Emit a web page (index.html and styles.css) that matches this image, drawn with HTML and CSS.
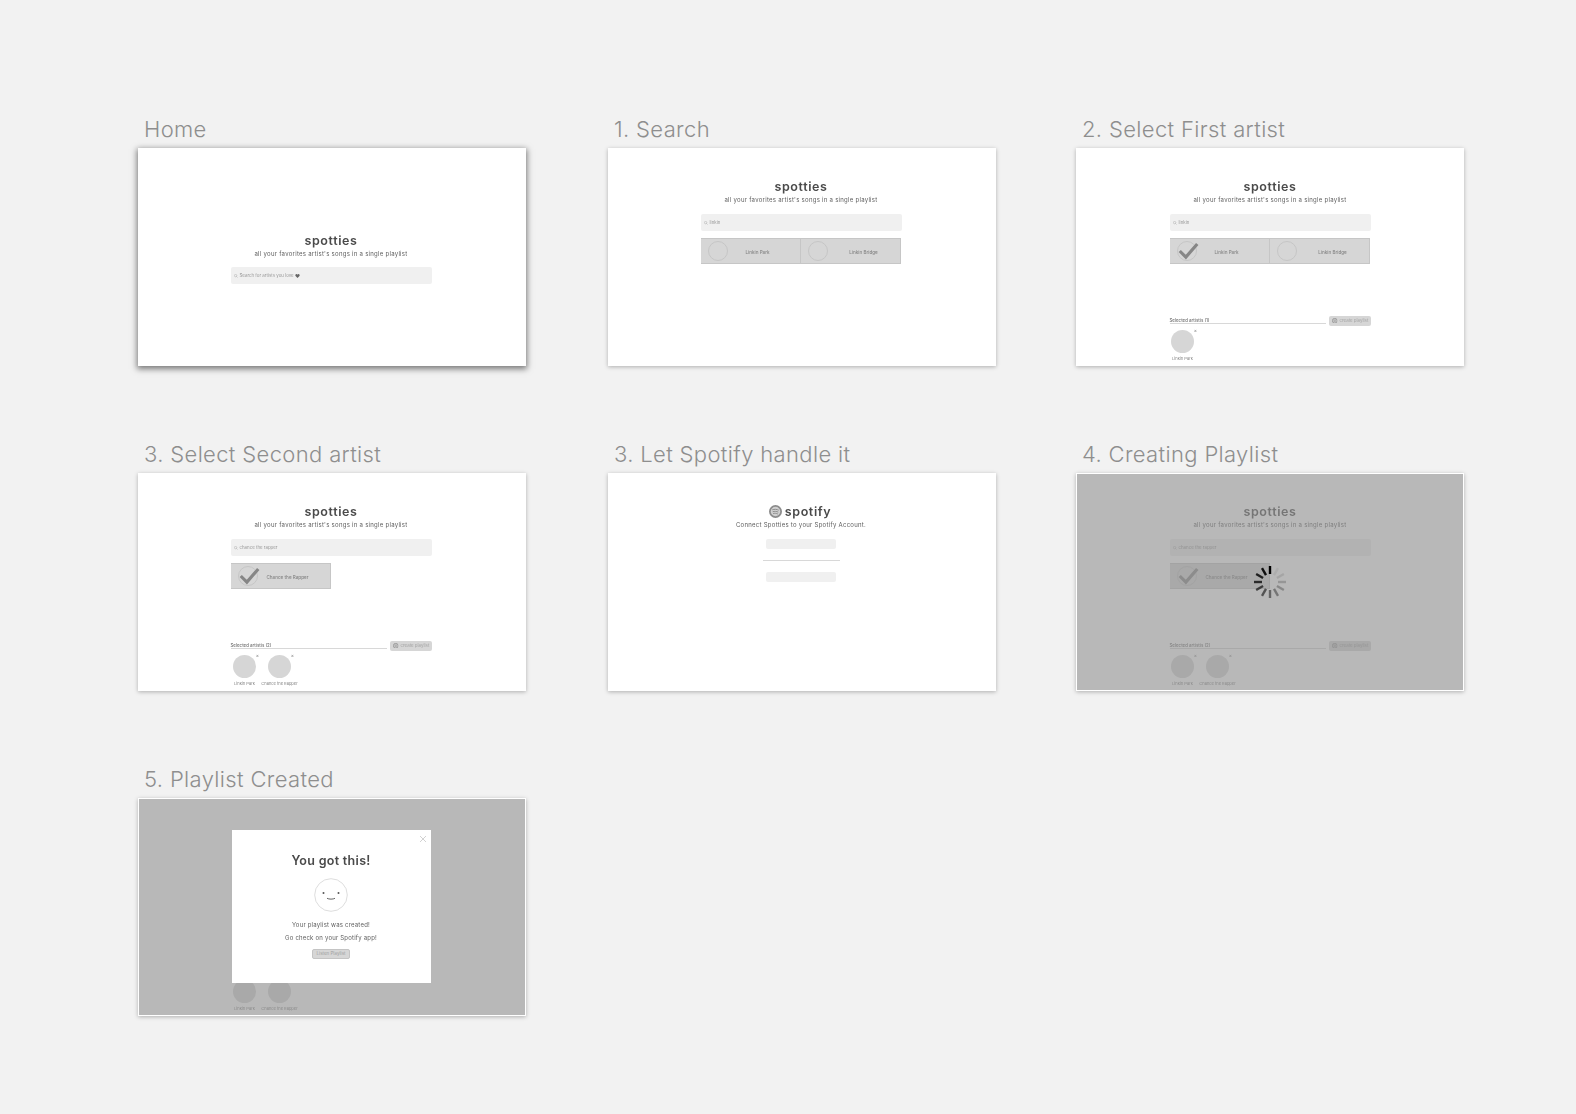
FILE: index.html
```html
<!DOCTYPE html>
<html lang="en">
<head>
    <meta charset="UTF-8">
    <meta name="viewport" content="width=device-width, initial-scale=1.0">
    <title>Spotties wireframes</title>
    <link rel="stylesheet" href="styles.css">
</head>
<body>

    <svg class="sprites" width="0" height="0" aria-hidden="true">
        <symbol id="search" viewBox="0 0 10 10">
            <circle cx="4" cy="4" r="3" fill="none" stroke="currentColor" stroke-width="1"/>
            <path d="M6.2 6.2 9 9" stroke="currentColor" stroke-width="1"/>
        </symbol>
        <symbol id="check" viewBox="0 0 24 20">
            <path d="M2 10 9 17 22 2" fill="none" stroke="currentColor" stroke-width="3.6"/>
        </symbol>
        <symbol id="spotify" viewBox="0 0 12 12">
            <circle cx="6" cy="6" r="5.2" fill="#d0d0d0" stroke="#8c8c8c" stroke-width="1.6"/>
            <path d="M3 4.4c2-.6 4.200-.5 6 .4M3.400 6.200c1.800-.5 3.600-.4 5.200.4M3.800 7.900c1.500-.4 3-.3 4.400.4" fill="none" stroke="#8c8c8c" stroke-width=".9"/>
        </symbol>
    </svg>

    <main class="board">

        <!-- Home -->
        <section class="screen">
            <h2 class="screen-title">Home</h2>
            <div class="frame frame-strong">
                <div class="app app-home">
                    <h1 class="brand">spotties</h1>
                    <p class="tagline">all your favorites artist's songs in a single playlist</p>
                    <div class="search">
                        <svg class="search-icon"><use href="#search"/></svg>
                        <span>Search for artists you love</span>
                        <svg class="heart" viewBox="0 0 10 9"><path d="M5 9 .6 4.300A2.500 2.500 0 0 1 5 1.500 2.500 2.500 0 0 1 9.400 4.300z" fill="#666"/></svg>
                    </div>
                </div>
            </div>
        </section>

        <!-- 1 -->
        <section class="screen">
            <h2 class="screen-title">1. Search</h2>
            <div class="frame">
                <div class="app">
                    <h1 class="brand">spotties</h1>
                    <p class="tagline">all your favorites artist's songs in a single playlist</p>
                    <div class="search"><svg class="search-icon"><use href="#search"/></svg><span>linkin</span></div>
                    <div class="results">
                        <div class="result"><span class="avatar"></span><span class="result-name">Linkin Park</span></div>
                        <div class="result"><span class="avatar"></span><span class="result-name">Linkin Bridge</span></div>
                    </div>
                </div>
            </div>
        </section>

        <!-- 2 -->
        <section class="screen">
            <h2 class="screen-title">2. Select First artist</h2>
            <div class="frame">
                <div class="app">
                    <h1 class="brand">spotties</h1>
                    <p class="tagline">all your favorites artist's songs in a single playlist</p>
                    <div class="search"><svg class="search-icon"><use href="#search"/></svg><span>linkin</span></div>
                    <div class="results">
                        <div class="result"><span class="avatar"><svg class="check"><use href="#check"/></svg></span><span class="result-name">Linkin Park</span></div>
                        <div class="result"><span class="avatar"></span><span class="result-name">Linkin Bridge</span></div>
                    </div>
                    <div class="selected">
                        <div class="selected-bar">
                            <span class="selected-label">Selected artistis (1)</span>
                            <span class="create-btn"><svg class="create-icon"><use href="#spotify"/></svg>create playlist</span>
                        </div>
                        <div class="artists">
                            <div class="artist"><span class="artist-pic"><i class="remove">×</i></span><span class="artist-name">Linkin Park</span></div>
                        </div>
                    </div>
                </div>
            </div>
        </section>

        <!-- 3 -->
        <section class="screen">
            <h2 class="screen-title">3. Select Second artist</h2>
            <div class="frame">
                <div class="app">
                    <h1 class="brand">spotties</h1>
                    <p class="tagline">all your favorites artist's songs in a single playlist</p>
                    <div class="search"><svg class="search-icon"><use href="#search"/></svg><span>chance the rapper</span></div>
                    <div class="results">
                        <div class="result"><span class="avatar"><svg class="check"><use href="#check"/></svg></span><span class="result-name">Chance the Rapper</span></div>
                    </div>
                    <div class="selected">
                        <div class="selected-bar">
                            <span class="selected-label">Selected artistis (2)</span>
                            <span class="create-btn"><svg class="create-icon"><use href="#spotify"/></svg>create playlist</span>
                        </div>
                        <div class="artists">
                            <div class="artist"><span class="artist-pic"><i class="remove">×</i></span><span class="artist-name">Linkin Park</span></div>
                            <div class="artist"><span class="artist-pic"><i class="remove">×</i></span><span class="artist-name">Chance the Rapper</span></div>
                        </div>
                    </div>
                </div>
            </div>
        </section>

        <!-- 3b -->
        <section class="screen">
            <h2 class="screen-title">3. Let Spotify handle it</h2>
            <div class="frame">
                <div class="app">
                    <h1 class="brand brand-spotify"><svg class="spotify-logo"><use href="#spotify"/></svg>spotify</h1>
                    <p class="tagline">Connect Spotties to your Spotify Account.</p>
                    <div class="login-field"></div>
                    <div class="login-rule"></div>
                    <div class="login-field login-field-last"></div>
                </div>
            </div>
        </section>

        <!-- 4 -->
        <section class="screen">
            <h2 class="screen-title">4. Creating Playlist</h2>
            <div class="frame">
                <div class="app app-faded">
                    <h1 class="brand">spotties</h1>
                    <p class="tagline">all your favorites artist's songs in a single playlist</p>
                    <div class="search"><svg class="search-icon"><use href="#search"/></svg><span>chance the rapper</span></div>
                    <div class="results">
                        <div class="result"><span class="avatar"><svg class="check"><use href="#check"/></svg></span><span class="result-name">Chance the Rapper</span></div>
                    </div>
                    <div class="selected">
                        <div class="selected-bar">
                            <span class="selected-label">Selected artistis (2)</span>
                            <span class="create-btn"><svg class="create-icon"><use href="#spotify"/></svg>create playlist</span>
                        </div>
                        <div class="artists">
                            <div class="artist"><span class="artist-pic"><i class="remove">×</i></span><span class="artist-name">Linkin Park</span></div>
                            <div class="artist"><span class="artist-pic"><i class="remove">×</i></span><span class="artist-name">Chance the Rapper</span></div>
                        </div>
                    </div>
                </div>
                <div class="overlay"></div>
                <svg class="spinner" viewBox="-17 -17 34 34">
                    <g stroke-width="2.400" stroke="#000">
                        <path d="M0-16V-8" stroke-opacity="1"/>
                        <path d="M0-16V-8" stroke-opacity=".06" transform="rotate(30)"/>
                        <path d="M0-16V-8" stroke-opacity=".1" transform="rotate(60)"/>
                        <path d="M0-16V-8" stroke-opacity=".18" transform="rotate(90)"/>
                        <path d="M0-16V-8" stroke-opacity=".26" transform="rotate(120)"/>
                        <path d="M0-16V-8" stroke-opacity=".36" transform="rotate(150)"/>
                        <path d="M0-16V-8" stroke-opacity=".45" transform="rotate(180)"/>
                        <path d="M0-16V-8" stroke-opacity=".55" transform="rotate(210)"/>
                        <path d="M0-16V-8" stroke-opacity=".65" transform="rotate(240)"/>
                        <path d="M0-16V-8" stroke-opacity=".75" transform="rotate(270)"/>
                        <path d="M0-16V-8" stroke-opacity=".82" transform="rotate(300)"/>
                        <path d="M0-16V-8" stroke-opacity=".92" transform="rotate(330)"/>
                    </g>
                </svg>
            </div>
        </section>

        <!-- 5 -->
        <section class="screen">
            <h2 class="screen-title">5. Playlist Created</h2>
            <div class="frame">
                <div class="app app-faded">
                    <div class="selected">
                        <div class="artists">
                            <div class="artist"><span class="artist-pic"></span><span class="artist-name">Linkin Park</span></div>
                            <div class="artist"><span class="artist-pic"></span><span class="artist-name">Chance the Rapper</span></div>
                        </div>
                    </div>
                </div>
                <div class="overlay"></div>
                <div class="modal">
                    <svg class="modal-close" viewBox="0 0 8 8"><path d="M1 1 7 7M7 1 1 7" stroke="#d2d2d2" stroke-width="1"/></svg>
                    <h3 class="modal-title">You got this!</h3>
                    <svg class="smile" viewBox="0 0 34 34">
                        <circle cx="17" cy="17" r="16.300" fill="#fff" stroke="#d4d4d4" stroke-width=".8"/>
                        <circle cx="9.500" cy="15" r="1" fill="#555"/>
                        <circle cx="24.500" cy="15" r="1" fill="#555"/>
                        <path d="M13 20.300c2 1.100 6 1.100 8 0" fill="none" stroke="#555" stroke-width=".9"/>
                    </svg>
                    <p class="modal-text">Your playlist was created!</p>
                    <p class="modal-text">Go check on your Spotify app!</p>
                    <span class="listen-btn">Listen Playlist</span>
                </div>
            </div>
        </section>

    </main>

</body>
</html>
```

FILE: styles.css
```css
body {
    margin: 0;
    background-color: #f2f2f2;
    font-family: Inter, "Liberation Sans", sans-serif;
    color: #4a4a4a;
}

.sprites {
    position: absolute;
}

.board {
    display: grid;
    grid-template-columns: 389px 387px 388px;
    column-gap: 81px;
    row-gap: 75px;
    padding: 116px 0 60px 138px;
}

.screen-title {
    margin: 0 0 6px 6px;
    font-size: 22px;
    line-height: 26px;
    font-weight: 300;
    letter-spacing: 0.35px;
    color: #8e8e8e;
}

.frame {
    position: relative;
    width: 388px;
    height: 218px;
    background-color: white;
    box-shadow: 0 1px 4px rgba(0, 0, 0, 0.28);
    overflow: hidden;
}

.frame-strong {
    box-shadow: 0 2px 6px 1px rgba(0, 0, 0, 0.5);
}

.app {
    display: flex;
    flex-direction: column;
    box-sizing: border-box;
    width: 201px;
    height: 100%;
    margin: 0 auto;
    padding-top: 31px;
    text-align: center;
    filter: blur(0.3px); /* a referencia e uma captura reduzida */
}

.screen:not(:nth-child(3n)) .app {
    margin-left: 92.500px;
}

.screen:nth-child(3n+1) .artists {
    margin-left: 1px;
}

.app-home {
    padding-top: 85px;
}

.app-home .search {
    margin-top: 9px;
}

.app-faded {
    opacity: 0.5;
}

.brand {
    margin: 0;
    font-size: 12.500px;
    line-height: 16px;
    font-weight: 600;
    letter-spacing: 0.6px;
}

.brand-spotify {
    display: flex;
    justify-content: center;
    align-items: center;
    gap: 3px;
    margin-right: 2px;
}

.spotify-logo {
    width: 13px;
    height: 13px;
    margin-top: -2px;
}

.tagline {
    margin: 0;
    font-size: 6px;
    line-height: 9px;
    letter-spacing: 0.27px;
    color: #5e5e5e;
}

.search {
    display: flex;
    align-items: center;
    height: 17px;
    margin-top: 10px;
    padding-left: 3px;
    border-radius: 2px;
    background-color: #f0f0f0;
    font-size: 4.400px;
    color: #999;
}

.search-icon {
    width: 4px;
    height: 4px;
    margin-right: 2px;
    color: #999;
}

.heart {
    width: 5px;
    height: 4px;
    margin-left: 1px;
}

.results {
    display: flex;
    margin-top: 7px;
    height: 26px;
}

.result {
    display: flex;
    align-items: center;
    box-sizing: border-box;
    width: 100px;
    height: 100%;
    padding-left: 7px;
    border: 1px solid #c6c6c6;
    border-width: 1px 1px 1px 0;
    background-color: #d6d6d6;
    font-size: 4.600px;
    font-weight: 500;
    color: #858585;
}

.result:first-child .result-name {
    padding-right: 12px;
}

.avatar {
    position: relative;
    flex: none;
    box-sizing: border-box;
    width: 20px;
    height: 20px;
    border: 1px solid #c6c6c6;
    border-radius: 50%;
}

.check {
    position: absolute;
    left: 0;
    top: 0;
    width: 21px;
    height: 18px;
    color: #868686;
}

.result-name {
    flex: 1;
    padding-top: 2px;
    text-align: center;
    white-space: nowrap;
}

.selected {
    margin-top: auto;
    padding-bottom: 5.500px;
}

.selected-bar {
    display: flex;
    align-items: center;
    gap: 3px;
}

.selected-label {
    flex: 1;
    padding: 1px 0 0.500px;
    border-bottom: 1px solid #d8d8d8;
    font-size: 4.400px;
    font-weight: 500;
    line-height: 5px;
    text-align: left;
    color: #707070;
}

.create-btn {
    display: flex;
    align-items: center;
    gap: 2px;
    box-sizing: border-box;
    width: 41.500px;
    height: 10px;
    padding-left: 3px;
    border-radius: 2px;
    background-color: #d6d6d6;
    font-size: 4.400px;
    white-space: nowrap;
    color: #a4a4a4;
}

.create-icon {
    width: 5.500px;
    height: 5.500px;
}

.artists {
    display: flex;
    gap: 9px;
    margin-top: 4.500px;
}

.artist {
    display: flex;
    flex-direction: column;
    align-items: center;
    width: 26px;
}

.artist-pic {
    position: relative;
    width: 23px;
    height: 23px;
    border-radius: 50%;
    background-color: #d6d6d6;
}

.remove {
    position: absolute;
    top: -2px;
    right: -3px;
    font-size: 5px;
    line-height: 5px;
    font-style: normal;
    color: #888;
}

.artist-name {
    margin-top: 2.500px;
    font-size: 4px;
    line-height: 5px;
    white-space: nowrap;
    color: #858585;
}

.login-field {
    width: 70px;
    height: 10px;
    margin: 10px auto 0;
    border-radius: 2px;
    background-color: #f0f0f0;
}

.login-rule {
    width: 77px;
    height: 1px;
    margin: 11px auto 0;
    background-color: #d8d8d8;
}

.login-field-last {
    margin-top: 11px;
}

/* Camada escura dos passos 4 e 5 */
.overlay {
    position: absolute;
    inset: 0;
    border: 1px solid white;
    background-color: rgba(0, 0, 0, 0.28);
}

.spinner {
    position: absolute;
    left: 177px;
    top: 92px;
    width: 34px;
    height: 34px;
}

.modal {
    position: absolute;
    left: 94px;
    top: 32px;
    display: flex;
    flex-direction: column;
    align-items: center;
    box-sizing: border-box;
    width: 199px;
    height: 153px;
    padding: 22.500px 1px 0 0;
    background-color: white;
}

.modal-close {
    position: absolute;
    top: 5px;
    right: 4px;
    width: 8px;
    height: 8px;
}

.modal-title {
    margin: 0;
    font-size: 12.500px;
    line-height: 16px;
    font-weight: 600;
    letter-spacing: 0.3px;
    filter: blur(0.3px);
}

.smile {
    width: 34px;
    height: 34px;
    margin: 9px 0 8px;
}

.modal-text {
    margin: 0 0 4.500px;
    font-size: 6px;
    line-height: 9px;
    letter-spacing: 0.2px;
    color: #5e5e5e;
    filter: blur(0.3px);
}

.listen-btn {
    box-sizing: border-box;
    width: 38px;
    height: 10px;
    margin-top: 2px;
    border: 1px solid #c4c4c4;
    border-radius: 2px;
    background-color: #d6d6d6;
    font-size: 4.500px;
    line-height: 8px;
    text-align: center;
    color: #a0a0a0;
}
```
